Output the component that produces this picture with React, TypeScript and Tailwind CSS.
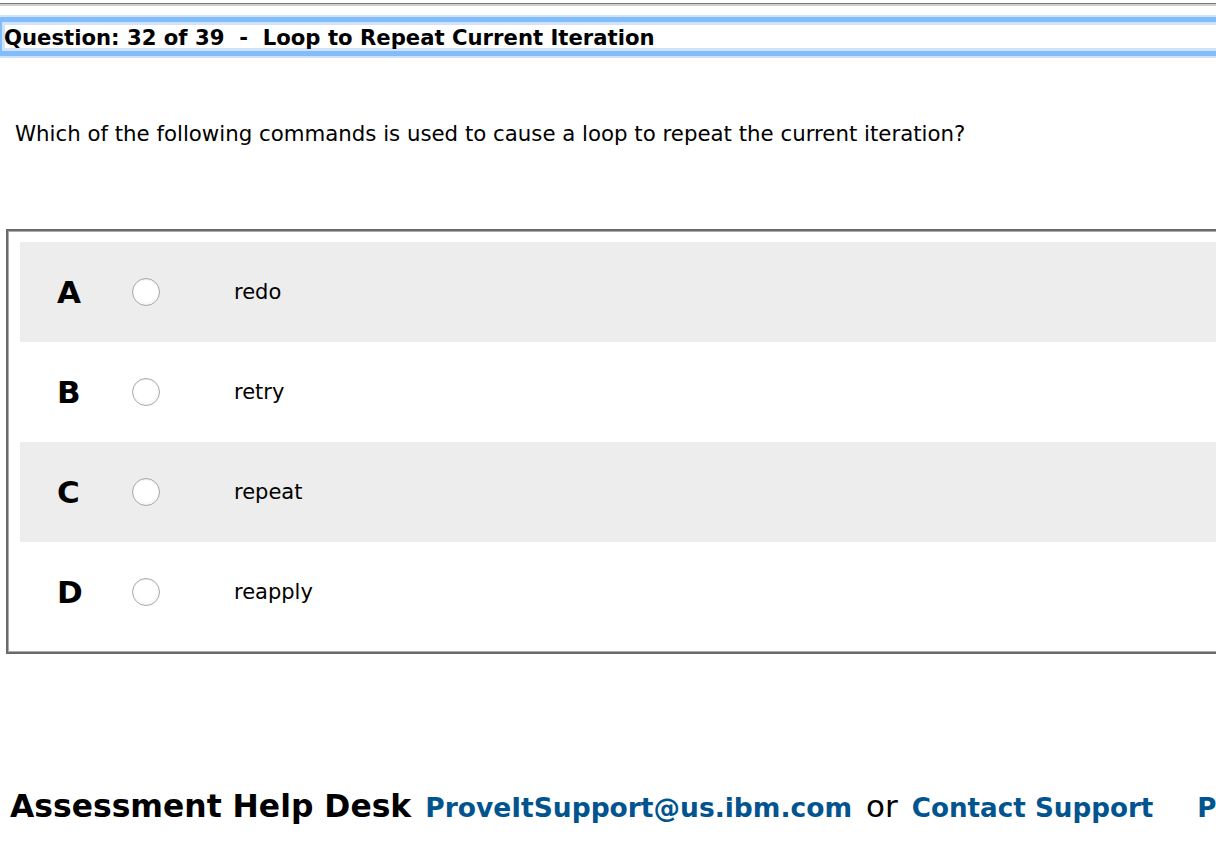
import React from "react";

const options = [
  { letter: "A", text: "redo" },
  { letter: "B", text: "retry" },
  { letter: "C", text: "repeat" },
  { letter: "D", text: "reapply" },
];

function Radio() {
  return (
    <div className="w-[28px] h-[28px] rounded-full border border-[#a9a9a9] bg-[radial-gradient(circle_at_50%_40%,#ffffff_55%,#ececec_100%)] shadow-[inset_0_1px_1px_rgba(0,0,0,0.08)]" />
  );
}

export default function App() {
  return (
    <div
      className="w-[1216px] h-[844px] overflow-hidden bg-white text-black"
      style={{ fontFamily: '"DejaVu Sans", Verdana, sans-serif' }}
    >
      <div className="h-[3px]" />
      <div className="h-px bg-[#787878]" />
      <div className="h-[2px] bg-[#cfcfcf]" />
      <div className="h-[9px]" />
      <div className="-ml-[3px] w-[1240px] mt-[2px] border-[5px] border-[#82bcfb] shadow-[0_0_0_2px_#cfe4fc,inset_0_0_0_3px_#cfe4fc]">
        <div className="h-[29px] pl-[2px] pt-[2px] flex items-center font-bold text-[21.2px] leading-[24px] whitespace-pre">
          {"Question: 32 of 39  -  Loop to Repeat Current Iteration"}
        </div>
      </div>
      <div className="h-[66px]" />
      <div className="pl-[15px] text-[21.3px] leading-[24px] whitespace-nowrap">
        Which of the following commands is used to cause a loop to repeat the current iteration?
      </div>
      <div className="h-[83px]" />
      <div className="ml-[6px] w-[1240px] border-2 border-[#6a6a6a]">
        <div className="border border-[#adadad] pl-[11px] pt-[10px] pb-[9px]">
          {options.map((o, i) => (
            <div
              key={o.letter}
              className={`h-[100px] flex items-center ${i % 2 === 0 ? "bg-[#ededed]" : "bg-white"}`}
            >
              <div className="w-[112px] pl-[37px] font-bold text-[31px] leading-[36px]">{o.letter}</div>
              <Radio />
              <div className="pl-[74px] text-[21px] leading-[24px]">{o.text}</div>
            </div>
          ))}
        </div>
      </div>
      <div className="h-[134px]" />
      <div className="pl-[10px] flex items-baseline whitespace-nowrap leading-[36px]">
        <span className="font-bold text-[31.4px]">Assessment Help Desk</span>
        <span className="ml-[14px] font-bold text-[26.5px] text-[#02548f]">ProveItSupport@us.ibm.com</span>
        <span className="ml-[14px] text-[31px]">or</span>
        <span className="ml-[14px] font-bold text-[26.2px] text-[#02548f]">Contact Support</span>
        <span className="ml-[44px] font-bold text-[26.2px] text-[#02548f]">Privacy</span>
      </div>
    </div>
  );
}
